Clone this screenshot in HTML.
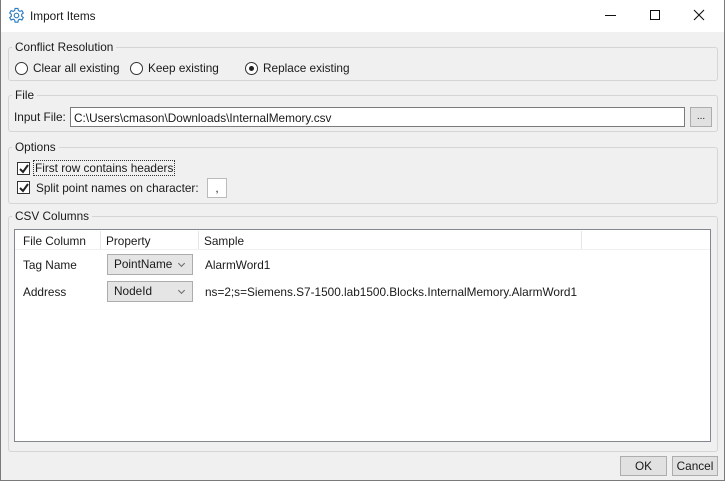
<!DOCTYPE html>
<html><head><style>
*{box-sizing:border-box;margin:0;padding:0}
body{width:725px;height:481px;background:#f0f0f0;font-family:"Liberation Sans",sans-serif;font-size:11.8px;color:#1a1a1a;position:relative;overflow:hidden}
.a{position:absolute}
.win{left:0;top:0;width:725px;height:481px;border:1px solid #7a7a7a;border-top:none}
.title{left:0;top:0;width:725px;height:32px;background:#fff}
.grp{position:absolute;border:1px solid #d5d5d5;border-radius:3px}
.lg{position:absolute;background:#f0f0f0;padding:0 3px}
.rad{position:absolute;width:13px;height:13px;border:1px solid #333;border-radius:50%;background:#fff}
.chk{position:absolute;width:13px;height:13px;border:1px solid #333;background:#fff}
.btn{position:absolute;background:#e1e1e1;border:1px solid #adadad;text-align:center}
.cb{position:absolute;background:#e5e5e5;border:1px solid #acacac;padding-left:6px;line-height:19px}
.cb:after{content:"";position:absolute;right:8px;top:6px;width:4px;height:4px;border-right:1px solid #666;border-bottom:1px solid #666;transform:rotate(45deg)}
</style></head><body>
<div class="a title"></div>
<svg class="a" style="left:8px;top:7px" width="17" height="17" viewBox="0 0 24 24" fill="none" stroke="#2b7bbf" stroke-width="1.6"><path d="M10 2h4l.6 3 2.2 1.2 2.8-1.2 2 3.4-2.3 2v2.6l2.3 2-2 3.4-2.8-1.2-2.2 1.2-.6 3h-4l-.6-3-2.2-1.2-2.8 1.2-2-3.4 2.3-2v-2.6l-2.3-2 2-3.4 2.8 1.2 2.2-1.2z"/><circle cx="12" cy="12" r="3.2"/></svg>
<div class="a" style="left:30px;top:9px">Import Items</div>
<div class="a" style="left:605px;top:15px;width:11px;height:1px;background:#111"></div>
<div class="a" style="left:650px;top:10px;width:10px;height:10px;border:1px solid #111"></div>
<svg class="a" style="left:693px;top:9px" width="12" height="12"><path d="M1 1L11 11M11 1L1 11" stroke="#111" stroke-width="1.1"/></svg>

<div class="grp" style="left:8px;top:47px;width:710px;height:34px"></div>
<div class="lg" style="left:12px;top:40px">Conflict Resolution</div>
<div class="rad" style="left:15px;top:62px"></div><div class="a" style="left:33px;top:61px">Clear all existing</div>
<div class="rad" style="left:130px;top:62px"></div><div class="a" style="left:148px;top:61px">Keep existing</div>
<div class="rad" style="left:245px;top:62px"></div><div class="a" style="left:249px;top:66px;width:5px;height:5px;border-radius:50%;background:#222"></div><div class="a" style="left:263px;top:61px">Replace existing</div>

<div class="grp" style="left:8px;top:95px;width:710px;height:37px"></div>
<div class="lg" style="left:12px;top:88px">File</div>
<div class="a" style="left:14px;top:110px">Input File:</div>
<div class="a" style="left:70px;top:107px;width:615px;height:20px;background:#fff;border:1px solid #7a7a7a;padding:3px 3px">C:\Users\cmason\Downloads\InternalMemory.csv</div>
<div class="btn" style="left:690px;top:107px;width:22px;height:20px;font-size:10px;line-height:18px">...</div>

<div class="grp" style="left:8px;top:147px;width:710px;height:57px"></div>
<div class="lg" style="left:12px;top:140px">Options</div>
<div class="chk" style="left:17px;top:162px"></div>
<svg class="a" style="left:18px;top:163px" width="12" height="12"><path d="M2 6L5 9L10 2" stroke="#222" stroke-width="2" fill="none"/></svg>
<div class="a" style="left:34px;top:161px;outline:1px dotted #333;padding:0 1px">First row contains headers</div>
<div class="chk" style="left:17px;top:181px"></div>
<svg class="a" style="left:18px;top:182px" width="12" height="12"><path d="M2 6L5 9L10 2" stroke="#222" stroke-width="2" fill="none"/></svg>
<div class="a" style="left:36px;top:181px">Split point names on character:</div>
<div class="a" style="left:207px;top:178px;width:20px;height:20px;background:#fff;border:1px solid #bbb;text-align:center;line-height:18px">,</div>

<div class="grp" style="left:8px;top:216px;width:710px;height:236px"></div>
<div class="lg" style="left:12px;top:209px">CSV Columns</div>
<div class="a" style="left:14px;top:229px;width:697px;height:213px;background:#fff;border:1px solid #828790"></div>
<div class="a" style="left:100px;top:231px;width:1px;height:18px;background:#e5e5e5"></div>
<div class="a" style="left:198px;top:231px;width:1px;height:18px;background:#e5e5e5"></div>
<div class="a" style="left:581px;top:231px;width:1px;height:18px;background:#e5e5e5"></div>
<div class="a" style="left:15px;top:249px;width:695px;height:1px;background:#f0f0f0"></div>
<div class="a" style="left:23px;top:234px">File Column</div>
<div class="a" style="left:106px;top:234px">Property</div>
<div class="a" style="left:204px;top:234px">Sample</div>
<div class="a" style="left:23px;top:258px">Tag Name</div>
<div class="cb" style="left:107px;top:254px;width:86px;height:21px">PointName</div>
<div class="a" style="left:205px;top:258px">AlarmWord1</div>
<div class="a" style="left:23px;top:285px">Address</div>
<div class="cb" style="left:107px;top:281px;width:86px;height:21px">NodeId</div>
<div class="a" style="left:205px;top:285px">ns=2;s=Siemens.S7-1500.lab1500.Blocks.InternalMemory.AlarmWord1</div>

<div class="btn" style="left:620px;top:456px;width:47px;height:20px;line-height:18px">OK</div>
<div class="btn" style="left:672px;top:456px;width:46px;height:20px;line-height:18px">Cancel</div>
<div class="a win"></div>
</body></html>
